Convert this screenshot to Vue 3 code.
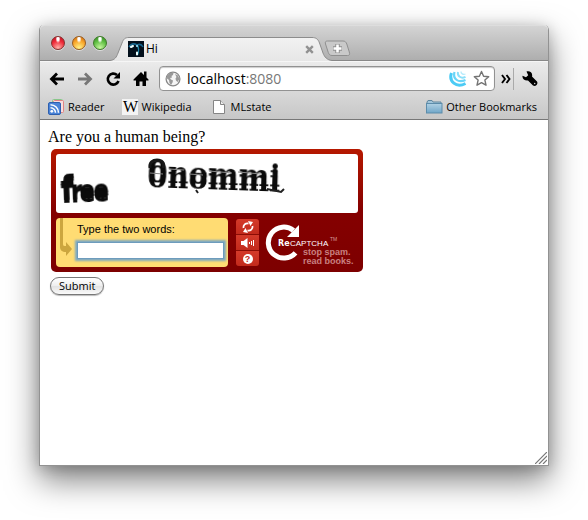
<script setup>
import { ref } from 'vue'

const answer = ref('')
const address = ref('localhost:8080')
const lights = ['red', 'amber', 'green']
</script>

<template>
  <div class="desktop">
    <main class="window">
      <header class="chrome">
        <div class="tabstrip">
          <div class="lights">
            <button v-for="c in lights" :key="c" type="button" class="light" :class="c" :aria-label="c"></button>
          </div>
          <div class="tab">
            <svg class="tab-shape" width="222" height="24" viewBox="0 0 222 24" aria-hidden="true">
              <defs>
                <linearGradient id="tabfill" x1="0" y1="0" x2="0" y2="1">
                  <stop offset="0" stop-color="#f2f2f2" />
                  <stop offset="1" stop-color="#e6e6e6" />
                </linearGradient>
              </defs>
              <path d="M0 24V23.5C5 23 6.500 20 8 16L12 6C13.500 2 15 .5 19 .5H202C206 .5 208 2 209.500 6L213 16C214.500 20 217 23 222 23.500V24Z" fill="url(#tabfill)" />
              <path d="M0 23.500C5 23 6.500 20 8 16L12 6C13.500 2 15 .5 19 .5H202C206 .5 208 2 209.500 6L213 16C214.500 20 217 23 222 23.500" fill="none" stroke="#8c8c8c" />
            </svg>
            <svg class="favicon" width="16" height="16" viewBox="0 0 16 16" aria-hidden="true">
              <rect width="16" height="16" fill="#03101c" />
              <path d="M1 6Q4 1 9 4Q13 2 15 6" fill="none" stroke="#16648c" stroke-width="1.600" />
              <path d="M9 4Q12 8 9.500 14" fill="none" stroke="#1d86a9" stroke-width="1.300" />
              <path d="M3 6L5 5M9 11.500L9 13.500" stroke="#eaffff" stroke-width="2" stroke-linecap="round" />
              <circle cx="9" cy="5" r="1.100" fill="#9ddcf0" />
            </svg>
            <span class="tab-title">Hi</span>
            <button class="tab-close" type="button" aria-label="Close tab">
              <svg width="9" height="9" viewBox="0 0 9 9"><path d="M1.200 1.200L7.800 7.800M7.800 1.200L1.200 7.800" stroke="#919191" stroke-width="2.400" /></svg>
            </button>
          </div>
          <button class="new-tab" type="button" aria-label="New tab">
            <svg width="27" height="17" viewBox="0 0 27 17">
              <path d="M3.500 1H19C21 1 22 2 22.800 4L25.300 12C26 14.500 25.500 15.500 23.500 15.500H8C6 15.500 5 14.500 4.300 12.500L1.500 4C1 2 1.500 1 3.500 1Z" fill="#c9c9c9" stroke="#8f8f8f" />
              <path d="M13.500 4V13M9 8.500H18" stroke="#8e8e8e" stroke-width="4.400" />
              <path d="M13.500 4.500V12.500M9.500 8.500H17.500" stroke="#fff" stroke-width="2.600" />
            </svg>
          </button>
        </div>

        <div class="toolbar">
          <button class="nav" type="button" aria-label="Back">
            <svg width="16" height="14" viewBox="0 0 16 14"><path d="M8 1.500L2.500 7L8 12.500M3 7H15" fill="none" stroke="#000" stroke-width="2.800" /></svg>
          </button>
          <button class="nav" type="button" aria-label="Forward">
            <svg width="16" height="14" viewBox="0 0 16 14"><path d="M8 1.500L13.500 7L8 12.500M13 7H1" fill="none" stroke="#777" stroke-width="2.800" /></svg>
          </button>
          <button class="nav" type="button" aria-label="Reload">
            <svg width="16" height="16" viewBox="0 0 16 16"><path d="M13.500 10A5.500 5.500 0 1 1 12 4" fill="none" stroke="#000" stroke-width="2.600" /><path d="M15 1V7.500H8.500Z" fill="#000" /></svg>
          </button>
          <button class="nav" type="button" aria-label="Home">
            <svg width="16" height="16" viewBox="0 0 16 16"><path d="M8 1L.5 8.500V9.500H3V15H6.500V10.500H9.500V15H13V9.500H15.500V8.500L13.500 6.500V.5H11V4Z" fill="#000" /></svg>
          </button>
          <div class="omnibox">
            <svg width="16" height="16" viewBox="0 0 16 16" aria-hidden="true">
              <circle cx="8" cy="8" r="6.900" fill="#f5f5f5" stroke="#888" stroke-width="1.300" />
              <path d="M2 5L5 1.800L8.500 2L8 4L6.500 5L7 6.500L5 7L6 8.500L8 9.500L7.500 11.500L6 14L4.500 12L4 9L2 7.500ZM10 3L13 4.500L14.500 8L12.500 11L11 9.500L10.500 7.500L11.500 6Z" fill="#999" />
            </svg>
            <label class="address">
              <span class="url" aria-hidden="true">localhost<i>:8080</i></span>
              <input v-model="address" type="text" aria-label="Address" />
            </label>
            <svg width="18" height="18" viewBox="0 0 18 18" aria-hidden="true" fill="none" stroke="#4ccbf5">
              <path d="M2.500 3C-.5 11 7 18.500 16.500 13.500" stroke-width="3" />
              <path d="M5.500 2C3.500 8.500 9 13.500 16.500 10" stroke-width="2.200" stroke="#69d5f8" />
              <path d="M9 2C8 6 12 9.300 16.500 6.800" stroke-width="1.900" stroke="#8bdff9" />
              <path d="M12 1.500C11.800 3.500 14 5 16.500 4" stroke-width="1.300" stroke="#b5ebfc" />
            </svg>
            <button type="button" class="star" aria-label="Bookmark this page">
              <svg width="17" height="17" viewBox="0 0 17 17"><path d="M8.500 1.500L10.600 6.200L15.700 6.700L11.900 10.100L13 15.200L8.500 12.600L4 15.200L5.100 10.100L1.300 6.700L6.400 6.200Z" fill="#fff" stroke="#747474" stroke-width="1.400" stroke-linejoin="round" /></svg>
            </button>
          </div>
          <button class="more" type="button" aria-label="More">
            <svg width="10" height="10" viewBox="0 0 10 10"><path d="M1 1L4 5L1 9M5.500 1L8.500 5L5.500 9" fill="none" stroke="#000" stroke-width="1.900" /></svg>
          </button>
          <button class="wrench" type="button" aria-label="Settings">
            <svg width="16" height="16" viewBox="0 0 16 16"><path d="M4.500 .5C8 -.5 11 2 10 5.500L15 10.500C16.500 13 13.800 16 11 14.500L6 9.500C3 10 0 8 .5 4.800L4 6.300L6.200 4.200Z" fill="#000" /><circle cx="12.700" cy="12.500" r=".7" fill="#ddd" /></svg>
          </button>
        </div>

        <nav class="bookmarks">
          <a href="#reader">
            <svg width="17" height="17" viewBox="0 0 17 17" aria-hidden="true">
              <rect x="4.500" y=".5" width="10" height="11" rx="1" fill="#e7f5e5" stroke="#88c68a" />
              <rect x="5.500" y="1.500" width="10" height="12" rx="1" fill="#f9dede" stroke="#e18383" />
              <rect x=".5" y="3.500" width="12" height="12" rx="1.500" fill="#4b84d7" stroke="#2d5faf" />
              <circle cx="3.800" cy="12.300" r="1.400" fill="#fff" />
              <path d="M2.500 8.700A5 5 0 0 1 7.500 13.700M2.500 5.700A8 8 0 0 1 10.500 13.700" fill="none" stroke="#fff" stroke-width="1.500" />
            </svg>
            <span>Reader</span>
          </a>
          <a class="wiki" href="#wikipedia"><span class="w" aria-hidden="true">W</span><span>Wikipedia</span></a>
          <a class="ml" href="#mlstate">
            <svg width="14" height="16" viewBox="0 0 14 16" aria-hidden="true"><path d="M1.500 1.500H8.500L12.500 5.500V14.500H1.500Z" fill="#fff" stroke="#858585" /><path d="M8.500 1.500V5.500H12.500" fill="#eee" stroke="#858585" /></svg>
            <span>MLstate</span>
          </a>
          <a class="other" href="#other">
            <svg width="17" height="16" viewBox="0 0 17 16" aria-hidden="true">
              <defs><linearGradient id="folder" x1="0" y1="0" x2="0" y2="1"><stop offset="0" stop-color="#b1d1e4" /><stop offset="1" stop-color="#70a6c8" /></linearGradient></defs>
              <path d="M1 13V3L2 1.500H6L7 3H15V13Z" fill="#a1c4d9" stroke="#60879f" />
              <rect x=".5" y="4.500" width="15.500" height="9.500" fill="url(#folder)" stroke="#5c8caa" />
            </svg>
            <span>Other Bookmarks</span>
          </a>
        </nav>
      </header>

      <form class="page" @submit.prevent>
        <p>Are you a human being?</p>
        <section class="captcha">
          <svg class="challenge" viewBox="0 0 302 59" role="img" aria-label="free 0nommi">
            <text class="word-a" transform="translate(5 49) rotate(-2)"><tspan class="tall">f</tspan><tspan dx="-3">r</tspan><tspan dx="-3">e</tspan><tspan dx="-2">e</tspan></text>
            <text class="word-b" transform="translate(91 33) rotate(2)">0nommi</text>
            <g fill="none">
              <path d="M94 14C93 8 97 6 101 6C106 6 109 9 107 14" stroke="#171717" stroke-width="3" />
              <path d="M94 19L107 20M113 15L128 16M133 20L147 21M153 17L176 19M182 18L205 20" stroke="#888" />
              <path d="M140 36L142 39M211 35L225 38L228 35" stroke="#222" stroke-width="2" />
            </g>
          </svg>
          <div class="controls">
            <div class="entry">
              <svg class="hint" width="15" height="41" viewBox="0 0 15 41" aria-hidden="true"><path d="M1 0H4V26C4 28 5 28 7 28V24L13 31L7 38V34C3 34 1 32 1 29Z" fill="#cca63f" /></svg>
              <div class="field">
                <label for="answer">Type the two words:</label>
                <input id="answer" v-model="answer" type="text" autocomplete="off" />
              </div>
            </div>
            <div class="buttons">
              <button type="button" aria-label="New challenge">
                <svg width="12" height="12" viewBox="0 0 12 12"><path d="M1.500 7C1 4 3.500 2 6.500 2.500M10.500 5C11 8 8.500 10 5.500 9.500" fill="none" stroke="#fff" stroke-width="1.800" /><path d="M6 0L11 1L8.500 5ZM6 12L1 11L3.500 7Z" fill="#fff" /></svg>
              </button>
              <button type="button" aria-label="Audio challenge">
                <svg width="13" height="10" viewBox="0 0 13 10"><path d="M0 3H2.500L6.500 0V10L2.500 7H0Z" fill="#fff" /><path d="M8.500 4V6M10.500 3V7M12.500 2V8" stroke="#fff" /></svg>
              </button>
              <button type="button" aria-label="Help">
                <span class="help">?</span>
              </button>
            </div>
            <svg class="logo" width="94" height="49" viewBox="0 0 94 49" role="img" aria-label="reCAPTCHA stop spam. read books.">
              <path d="M30.500 34.800A15.500 15.500 0 1 1 28.500 12.500" fill="none" stroke="#fff" stroke-width="5" />
              <path d="M34 7V19H22Z" fill="#fff" />
              <text x="13" y="28" class="re">Re</text>
              <text x="25" y="28" class="cap">CAPTCHA</text>
              <text x="65" y="23" class="tm">TM</text>
              <text x="38" y="37" class="slogan">stop spam.</text>
              <text x="38" y="46" class="slogan">read books.</text>
            </svg>
          </div>
        </section>
        <button class="submit" type="submit">Submit</button>
        <svg class="grip" width="12" height="12" viewBox="0 0 12 12" aria-hidden="true"><path d="M0 12L12 0M4 12L12 4M8 12L12 8" stroke="#777" stroke-width="1.200" /></svg>
      </form>
    </main>
  </div>
</template>

<style>
body { background: #fff; }
</style>

<style scoped>
* { box-sizing: border-box; }
button { padding: 0; border: 0; background: none; display: flex; align-items: center; justify-content: center; }
svg { display: block; flex: none; }
.desktop { min-height: 100vh; display: flex; padding: 25px 39px 54px; overflow: hidden; }
.window {
  flex: 1; min-width: 0; display: flex; flex-direction: column;
  border: 1px solid #929292; border-top: 0; border-radius: 5px 5px 0 0;
  box-shadow: 0 14px 32px rgba(0, 0, 0, .5), 0 2px 14px rgba(0, 0, 0, .18);
  font-family: "Open Sans", "Noto Sans", sans-serif; color: #000;
}
.chrome { border-radius: 5px 5px 0 0; background: linear-gradient(#ececec 35px, #c7c7c7); border-bottom: 1px solid #777; }
.tabstrip {
  height: 36px; display: flex; align-items: flex-end; border-radius: 5px 5px 0 0;
  background: linear-gradient(#d4d4d4, #aeaeae); border-top: 1px solid #ddd;
  border-bottom: 1px solid #888;
}
.lights { display: flex; gap: 7px; padding: 0 3px 10px 11px; }
.light { width: 14px; height: 14px; border-radius: 50%; border: 1px solid #85322f; box-shadow: 0 1px 0 #ddd; }
.red { background: radial-gradient(ellipse at 50% 15%, #fff 0 12%, transparent 30%), radial-gradient(circle at 50% 90%, #ffb3ab, #f02c3a 55%, #b50d20); }
.amber { border-color: #985c20; background: radial-gradient(ellipse at 50% 15%, #fff 0 12%, transparent 30%), radial-gradient(circle at 50% 90%, #fff38a, #f9a72b 55%, #c96510); }
.green { border-color: #3e7b28; background: radial-gradient(ellipse at 50% 15%, #fff 0 12%, transparent 30%), radial-gradient(circle at 50% 90%, #c9f8a0, #61c044 55%, #2e8320); }
.tab { position: relative; width: 222px; height: 24px; margin-bottom: -1px; padding: 0 18px; display: flex; align-items: center; gap: 2px; }
.tab-shape { position: absolute; inset: 0; }
.favicon, .tab-title, .tab-close { position: relative; }
.tab-title { flex: 1; font-size: 12px; line-height: 16px; }
.new-tab { margin: 0 0 3px -8px; }
.toolbar { height: 34px; display: flex; align-items: center; padding: 0 10px 0 9px; border-top: 1px solid #f6f6f6; }
.nav { width: 28px; height: 28px; justify-content: flex-start; }
.omnibox {
  flex: 1; min-width: 0; height: 25px; margin-left: -2px; padding: 0 4px 0 5px; display: flex; align-items: center; gap: 6px;
  border: 1px solid #929292; border-radius: 4px; background: #fff; box-shadow: inset 0 1px 1px #ccc;
}
.address { position: relative; flex: 1; min-width: 0; font-size: 14px; line-height: 20px; }
.address input { position: absolute; inset: 0; width: 100%; border: 0; padding: 0; background: none; outline: 0; font: inherit; color: transparent; }
.url i { font-style: normal; color: #777; }
.more { width: 19px; height: 22px; padding-left: 3px; border-right: 1px solid #aaa; }
.wrench { margin-left: 8px; }
.bookmarks { height: 24px; display: flex; align-items: center; padding: 0 11px 0 8px; font-size: 11px; line-height: 16px; }
.bookmarks a { display: flex; align-items: center; gap: 3px; color: #000; text-decoration: none; }
.bookmarks .wiki { margin-left: 18px; }
.bookmarks .ml { margin-left: 20px; gap: 5px; }
.bookmarks .other { margin-left: auto; }
.w { width: 16px; height: 16px; background: #f4f4f4; font: 16px/16px "Liberation Serif", serif; text-align: center; }
.page { position: relative; flex: 1; padding: 8px; background: #fff; }
.page p { margin: 0; font: 16px/18px "Liberation Serif", serif; }
.captcha {
  width: 312px; max-width: 100%; margin: 3px 3px 5px; padding: 5px; border-radius: 5px;
  background: linear-gradient(#b61800, #850000 50%, #7d0000);
}
.challenge { width: 100%; background: #fff; border-radius: 3px; }
.word-a { font: bold 26px "DejaVu Sans Condensed", "DejaVu Sans", sans-serif; fill: #0b0b0b; filter: drop-shadow(0 -3px 0 #0b0b0b); }
.tall { font-size: 34px; }
.word-b { font: bold 29px "DejaVu Serif", serif; fill: #0b0b0b; filter: drop-shadow(0 -5px 0 #0b0b0b); }
.controls { display: flex; margin-top: 5px; }
.entry { flex: 1; min-width: 0; height: 49px; display: flex; border-radius: 4px; background: #ffdc73; }
.hint { margin-left: 3px; }
.field { flex: 1; min-width: 0; display: flex; flex-direction: column; gap: 6px; padding: 5px 4px 0 3px; font: 11px/13px "Liberation Sans", sans-serif; }
.field label { white-space: nowrap; }
.field input { width: 100%; height: 17px; padding: 0 2px; border: 1px solid #6d9cbd; outline: 0; box-shadow: 0 0 2px 2px #7fa9c1; background: #fff; font: inherit; }
.buttons { width: 23px; height: 47px; margin: 1px 6px 0 8px; display: grid; grid-template-rows: 1fr 1fr 1fr; gap: 1px; background: #8a0d05; border-radius: 3px; overflow: hidden; }
.buttons button { background: linear-gradient(#d43a2a, #c22a1c); }
.help { width: 10px; height: 10px; border-radius: 50%; background: #fff; color: #c22a1c; font: bold 9px/10px "Liberation Sans", sans-serif; }
.logo { margin-right: -1px; }
.re { font: bold 8px "DejaVu Sans", sans-serif; fill: #fff; }
.cap { font: 8px "Liberation Sans", sans-serif; fill: #fff; }
.tm { font: 5px "Liberation Sans", sans-serif; fill: #d59a9a; }
.slogan { font: bold 9px "Liberation Sans", sans-serif; fill: #c98080; }
.submit {
  height: 18px; margin-left: 2px; padding: 0 8px; border: 1px solid #777; border-radius: 9px;
  background: linear-gradient(#fff, #eee 50%, #e2e2e2 51%, #fafafa); box-shadow: 0 1px 1px #bbb;
  font: 11px/16px "Open Sans", sans-serif; color: #000;
}
.grip { position: absolute; right: 1px; bottom: 1px; }
</style>
